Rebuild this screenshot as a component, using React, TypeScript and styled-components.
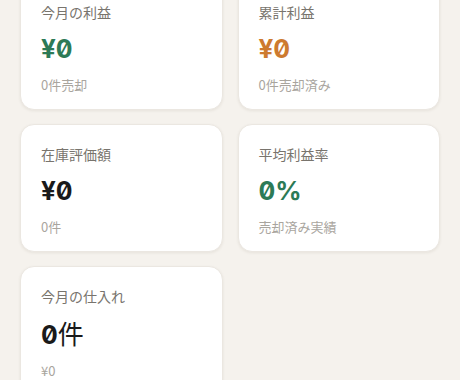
import React from 'react'
import styled, { createGlobalStyle } from 'styled-components'

const GlobalStyle = createGlobalStyle`
  html, body {
    margin: 0;
    padding: 0;
    background: #f5f2ed;
    font-family: "Noto Sans CJK JP", "Noto Sans", sans-serif;
  }
`

const Page = styled.div`
  padding: 0 20px;
  height: 380px;
  overflow: hidden;
`

const Grid = styled.div`
  display: grid;
  grid-template-columns: 1fr 1fr;
  gap: 14px 15px;
  /* the view is scrolled down a little: the first row is cut off at the top */
  margin-top: -18px;
`

const Card = styled.div`
  background: #ffffff;
  border: 1px solid #ebe7e1;
  border-radius: 14px;
  box-shadow: 0 1px 3px rgba(60, 45, 20, 0.08);
  padding: 19px 20px 15px;
  display: flex;
  flex-direction: column;
`

const Label = styled.div`
  font-size: 14px;
  line-height: 20px;
  color: #78746d;
`

type Tone = 'green' | 'orange' | 'plain'

const toneColors: Record<Tone, string> = {
  green: '#2c7a56',
  orange: '#cd7a2f',
  plain: '#1a1a1a',
}

const Value = styled.div<{ $tone: Tone }>`
  margin-top: 12px;
  font-family: Inter, "Noto Sans CJK JP", sans-serif;
  font-feature-settings: "zero" 1, "tnum" 1;
  font-size: 26px;
  font-weight: 700;
  line-height: 30px;
  color: ${({ $tone }) => toneColors[$tone]};
`

// the CJK unit after a number is drawn in the normal weight
const Unit = styled.span`
  font-family: "Noto Sans CJK JP", sans-serif;
  font-weight: 400;
`

const Sub = styled.div`
  margin-top: 11px;
  font-size: 13px;
  line-height: 19px;
  color: #a9a59e;
`

const stats: { label: string; value: string; unit?: string; sub: string; tone: Tone }[] = [
  { label: '今月の利益', value: '¥0', sub: '0件売却', tone: 'green' },
  { label: '累計利益', value: '¥0', sub: '0件売却済み', tone: 'orange' },
  { label: '在庫評価額', value: '¥0', sub: '0件', tone: 'plain' },
  { label: '平均利益率', value: '0%', sub: '売却済み実績', tone: 'green' },
  { label: '今月の仕入れ', value: '0', unit: '件', sub: '¥0', tone: 'plain' },
]

export default function App() {
  return (
    <>
      <GlobalStyle />
      <Page>
        <Grid>
          {stats.map((s) => (
            <Card key={s.label}>
              <Label>{s.label}</Label>
              <Value $tone={s.tone}>
                {s.value}
                {s.unit && <Unit>{s.unit}</Unit>}
              </Value>
              <Sub>{s.sub}</Sub>
            </Card>
          ))}
        </Grid>
      </Page>
    </>
  )
}
